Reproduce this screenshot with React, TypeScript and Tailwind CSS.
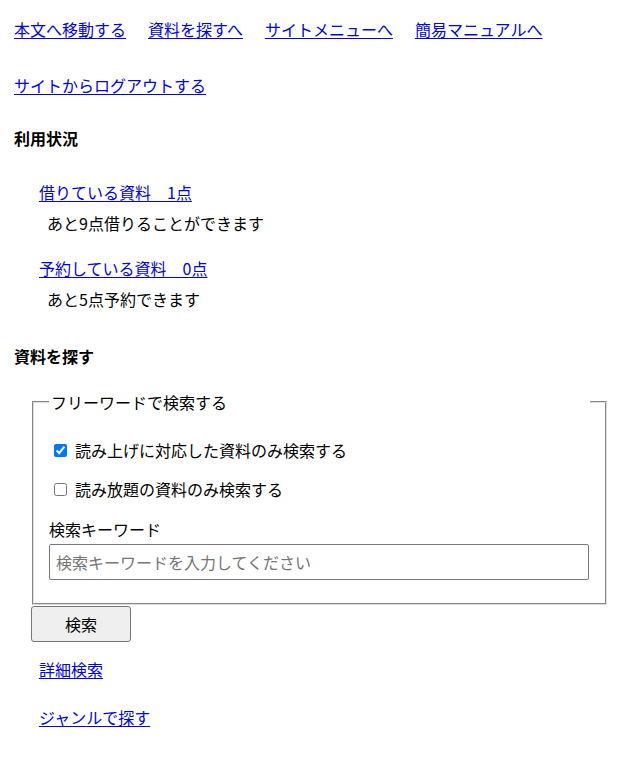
import React from 'react';

const linkCls = 'text-[#0000ee] underline underline-offset-2';

const App: React.FC = () => {
  return (
    <div className="min-h-[758px] bg-white px-[14px] pt-[17px] text-base leading-6 text-black [font-family:'Noto_Sans_CJK_JP','Noto_Sans',sans-serif]">
      {/* skip links */}
      <nav className="flex h-6 gap-[22px]">
        <a href="#main" className={linkCls}>本文へ移動する</a>
        <a href="#search" className={linkCls}>資料を探すへ</a>
        <a href="#menu" className={linkCls}>サイトメニューへ</a>
        <a href="#manual" className={linkCls}>簡易マニュアルへ</a>
      </nav>

      <div className="mt-[32px] h-6">
        <a href="#logout" className={linkCls}>サイトからログアウトする</a>
      </div>

      <h2 className="mt-[29px] h-6 font-bold">利用状況</h2>

      <div className="pl-[25px]">
        <div className="mt-[30px] h-6">
          <a href="#loans" className={linkCls}>借りている資料　1点</a>
        </div>
        <p className="mt-[7px] h-6 pl-[8px]">あと9点借りることができます</p>
        <div className="mt-[21px] h-6">
          <a href="#reserves" className={linkCls}>予約している資料　0点</a>
        </div>
        <p className="mt-[7px] h-6 pl-[8px]">あと5点予約できます</p>
      </div>

      <h2 id="search" className="mt-[33px] h-6 font-bold">資料を探す</h2>

      <form className="mt-[22px]" onSubmit={(e) => e.preventDefault()}>
        <fieldset className="ml-[18px] w-[575px] border-2 border-[#dcdcdc] px-[15px] pb-[23px] [border-style:groove]">
          <legend className="h-6 w-full px-[2px]">フリーワードで検索する</legend>

          <label className="mt-[24px] flex h-6 items-center">
            <input type="checkbox" defaultChecked className="ml-[5px] mr-[8px] h-[13px] w-[13px] accent-[#0075ff]" />
            <span>読み上げに対応した資料のみ検索する</span>
          </label>
          <label className="mt-[15px] flex h-6 items-center">
            <input type="checkbox" className="ml-[5px] mr-[8px] h-[13px] w-[13px] accent-[#0075ff]" />
            <span>読み放題の資料のみ検索する</span>
          </label>

          <label htmlFor="kw" className="mt-[16px] block h-6">検索キーワード</label>
          <input
            id="kw"
            type="text"
            placeholder="検索キーワードを入力してください"
            className="mt-[3px] block h-[36px] w-[540px] rounded-[2px] border border-[#767676] px-[6px] text-base placeholder:text-[#757575]"
          />
        </fieldset>

        <button
          type="submit"
          className="ml-[17px] mt-[1px] h-[36px] w-[100px] rounded-[3px] border border-[#767676] bg-[#efefef] text-base"
        >
          検索
        </button>
      </form>

      <div className="pl-[25px]">
        <div className="mt-[15px] h-6">
          <a href="#advanced" className={linkCls}>詳細検索</a>
        </div>
        <div className="mt-[24px] h-6">
          <a href="#genre" className={linkCls}>ジャンルで探す</a>
        </div>
      </div>
    </div>
  );
};

export default App;
